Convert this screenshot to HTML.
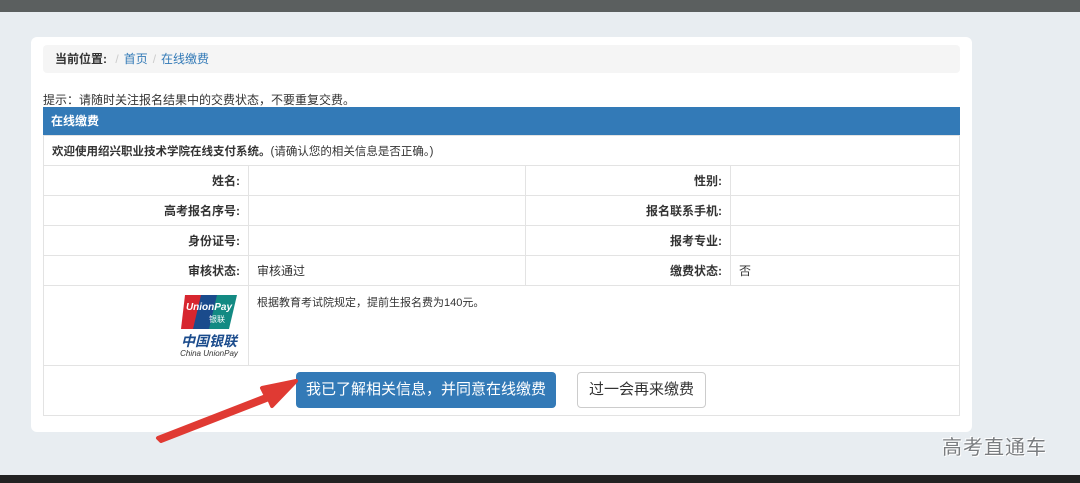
<!DOCTYPE html>
<html><head><meta charset="utf-8"><style>
*{margin:0;padding:0;box-sizing:border-box}
body{width:1080px;height:483px;background:#e8edf1;font-family:"Liberation Sans","Noto Sans CJK SC",sans-serif;font-size:12px;color:#333;position:relative;overflow:hidden}
.top{position:absolute;left:0;top:0;width:1080px;height:12px;background:#5b5f5f}
.bot{position:absolute;left:0;top:475px;width:1080px;height:8px;background:#222}
.card{position:absolute;left:31px;top:37px;width:941px;height:395px;background:#fff;border-radius:6px}
.bc{position:absolute;left:43px;top:45px;width:917px;height:28px;background:#f5f5f5;border-radius:4px;line-height:28px;padding-left:12px}
.bc b{color:#333}.bc span{color:#ccc;margin:0 5px}.bc a{color:#337ab7}
.hint{position:absolute;left:43px;top:91px;font-size:12px}
.hd{position:absolute;left:43px;top:107px;width:917px;height:28px;background:#337ab7;color:#fff;font-weight:bold;line-height:28px;padding-left:8px}
table{position:absolute;left:43px;top:135px;width:917px;border-collapse:collapse}
td{border:1px solid #e3e3e3;height:30px;padding:0 8px;font-size:12px}
td.l{text-align:right;font-weight:bold;width:205px}
.btn1{position:absolute;left:296px;top:372px;width:260px;height:36px;background:#337ab7;color:#fff;border-radius:4px;font-size:15px;line-height:36px;text-align:center}
.btn2{position:absolute;left:577px;top:372px;width:129px;height:36px;background:#fff;border:1px solid #ccc;border-radius:4px;font-size:15px;line-height:34px;text-align:center}
.wm{position:absolute;left:942px;top:431px;color:#7a7d80;font-size:20px;letter-spacing:1px;text-shadow:0 0 1px #fff,1px 1px 0 #fff,-1px -1px 0 #fff}
</style></head><body>
<div class="top"></div>
<div class="card"></div>
<div class="bc"><b>当前位置:</b> <span>/</span><a>首页</a><span>/</span><a>在线缴费</a></div>
<div class="hint">提示：请随时关注报名结果中的交费状态，不要重复交费。</div>
<div class="hd">在线缴费</div>
<table>
<tr><td colspan="4" style="height:30px;font-size:11.5px"><b>欢迎使用绍兴职业技术学院在线支付系统。</b>(请确认您的相关信息是否正确。)</td></tr>
<tr><td class="l">姓名:</td><td style="width:277px"></td><td class="l">性别:</td><td></td></tr>
<tr><td class="l">高考报名序号:</td><td></td><td class="l">报名联系手机:</td><td></td></tr>
<tr><td class="l">身份证号:</td><td></td><td class="l">报考专业:</td><td></td></tr>
<tr><td class="l">审核状态:</td><td style="font-weight:normal">审核通过</td><td class="l">缴费状态:</td><td>否</td></tr>
<tr><td style="height:80px;text-align:right;vertical-align:middle;padding:0 6px">
<div style="display:inline-block;text-align:center;width:66px">
<svg width="56" height="38" viewBox="0 0 56 38"><path d="M4 2h18l-8 34H0z" fill="#d7262f"/><path d="M20 2h18l-8 34H12z" fill="#1a4b8c"/><path d="M36 2h20l-8 34H28z" fill="#138a83"/><text x="28" y="17" font-size="10" font-style="italic" font-weight="bold" fill="#fff" text-anchor="middle" font-family="Liberation Sans">UnionPay</text><text x="36" y="29" font-size="8" fill="#fff" text-anchor="middle" font-family="Noto Sans CJK SC">银联</text></svg>
<div style="color:#1a4b8c;font-size:14px;font-weight:bold;font-style:italic;line-height:15px">中国银联</div>
<div style="font-size:8px;font-style:italic;line-height:10px">China UnionPay</div></div></td>
<td colspan="3" style="vertical-align:top;padding-top:8px;font-size:11px">根据教育考试院规定，提前生报名费为140元。</td></tr>
<tr><td colspan="4" style="height:50px"></td></tr>
</table>
<div class="btn1">我已了解相关信息，并同意在线缴费</div>
<div class="btn2">过一会再来缴费</div>
<svg style="position:absolute;left:0;top:0" width="1080" height="483"><path d="M158 438L266 396L262 388L296 381L272 406L269 399L161 441Z" fill="#e03a33" stroke="#e03a33" stroke-width="4" stroke-linejoin="round"/></svg>
<div class="wm">高考直通车</div>
<div class="bot"></div>
</body></html>
